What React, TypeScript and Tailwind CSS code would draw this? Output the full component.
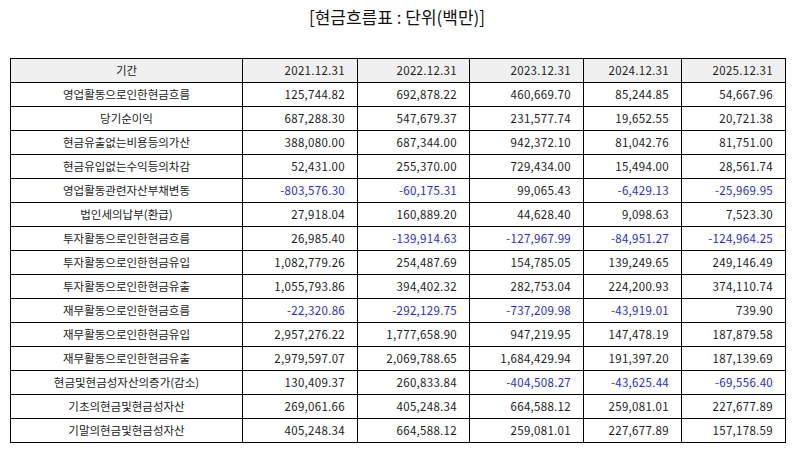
const years = ["2021.12.31", "2022.12.31", "2023.12.31", "2024.12.31", "2025.12.31"];

const rows: [string, string[]][] = [
  ["영업활동으로인한현금흐름", ["125,744.82", "692,878.22", "460,669.70", "85,244.85", "54,667.96"]],
  ["당기순이익", ["687,288.30", "547,679.37", "231,577.74", "19,652.55", "20,721.38"]],
  ["현금유출없는비용등의가산", ["388,080.00", "687,344.00", "942,372.10", "81,042.76", "81,751.00"]],
  ["현금유입없는수익등의차감", ["52,431.00", "255,370.00", "729,434.00", "15,494.00", "28,561.74"]],
  ["영업활동관련자산부채변동", ["-803,576.30", "-60,175.31", "99,065.43", "-6,429.13", "-25,969.95"]],
  ["법인세의납부(환급)", ["27,918.04", "160,889.20", "44,628.40", "9,098.63", "7,523.30"]],
  ["투자활동으로인한현금흐름", ["26,985.40", "-139,914.63", "-127,967.99", "-84,951.27", "-124,964.25"]],
  ["투자활동으로인한현금유입", ["1,082,779.26", "254,487.69", "154,785.05", "139,249.65", "249,146.49"]],
  ["투자활동으로인한현금유출", ["1,055,793.86", "394,402.32", "282,753.04", "224,200.93", "374,110.74"]],
  ["재무활동으로인한현금흐름", ["-22,320.86", "-292,129.75", "-737,209.98", "-43,919.01", "739.90"]],
  ["재무활동으로인한현금유입", ["2,957,276.22", "1,777,658.90", "947,219.95", "147,478.19", "187,879.58"]],
  ["재무활동으로인한현금유출", ["2,979,597.07", "2,069,788.65", "1,684,429.94", "191,397.20", "187,139.69"]],
  ["현금및현금성자산의증가(감소)", ["130,409.37", "260,833.84", "-404,508.27", "-43,625.44", "-69,556.40"]],
  ["기초의현금및현금성자산", ["269,061.66", "405,248.34", "664,588.12", "259,081.01", "227,677.89"]],
  ["기말의현금및현금성자산", ["405,248.34", "664,588.12", "259,081.01", "227,677.89", "157,178.59"]],
];

export default function App() {
  return (
    <div
      className="w-[794px] h-[452px] bg-white text-[#222] overflow-hidden"
      style={{ fontFamily: '"Noto Sans CJK KR", "Noto Sans", sans-serif' }}
    >
      <h1 className="pt-[5px] h-[58px] text-center text-[17px] leading-[24px] text-[#111]">
        [현금흐름표 : 단위(백만)]
      </h1>

      <table className="ml-[10px] w-[775px] table-fixed border-collapse text-[11.5px]">
        <colgroup>
          <col className="w-[232px]" />
          <col className="w-[115px]" />
          <col className="w-[112px]" />
          <col className="w-[114px]" />
          <col className="w-[98px]" />
          <col className="w-[104px]" />
        </colgroup>
        <thead>
          <tr className="h-[24px] bg-[#f0f0f0]">
            <th className="border border-black font-normal text-center">기간</th>
            {years.map((y) => (
              <th key={y} className="border border-black font-normal text-right pr-3 tracking-[0.3px]">
                {y}
              </th>
            ))}
          </tr>
        </thead>
        <tbody>
          {rows.map(([label, values]) => (
            <tr key={label} className="h-[24px]">
              <td className="border border-black text-center">{label}</td>
              {values.map((v, i) => (
                <td
                  key={i}
                  className={
                    v.startsWith("-")
                      ? "border border-black text-right pr-3 tracking-[0.3px] text-[#2a2ad6]"
                      : "border border-black text-right pr-3 tracking-[0.3px]"
                  }
                >
                  {v}
                </td>
              ))}
            </tr>
          ))}
        </tbody>
      </table>
    </div>
  );
}
